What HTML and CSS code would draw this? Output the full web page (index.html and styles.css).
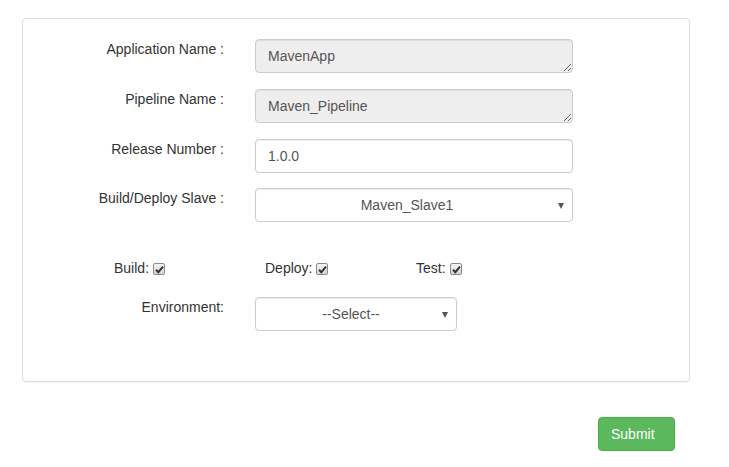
FILE: index.html
```html
<!DOCTYPE html>
<html>
<head>
<meta charset="utf-8">
<link rel="stylesheet" href="styles.css">
</head>
<body>
<div class="page">
  <form class="panel">
    <div class="row">
      <label class="lbl">Application Name :</label>
      <textarea class="field readonly" readonly>MavenApp</textarea>
    </div>
    <div class="row">
      <label class="lbl">Pipeline Name :</label>
      <textarea class="field readonly" readonly>Maven_Pipeline</textarea>
    </div>
    <div class="row">
      <label class="lbl">Release Number :</label>
      <div class="field">1.0.0</div>
    </div>
    <div class="row row-select">
      <label class="lbl">Build/Deploy Slave :</label>
      <div class="field select"><span class="sel-text">Maven_Slave1</span><span class="caret"></span></div>
    </div>
    <div class="checks">
      <div class="check">Build: <span class="box"><svg viewBox="0 0 13 13" width="13" height="13"><path d="M3 6.8 L5.3 9.2 L10 3.6" fill="none" stroke="#333" stroke-width="2"/></svg></span></div>
      <div class="check">Deploy: <span class="box"><svg viewBox="0 0 13 13" width="13" height="13"><path d="M3 6.8 L5.3 9.2 L10 3.6" fill="none" stroke="#333" stroke-width="2"/></svg></span></div>
      <div class="check">Test: <span class="box"><svg viewBox="0 0 13 13" width="13" height="13"><path d="M3 6.8 L5.3 9.2 L10 3.6" fill="none" stroke="#333" stroke-width="2"/></svg></span></div>
    </div>
    <div class="row">
      <label class="lbl">Environment:</label>
      <div class="field select small"><span class="sel-text">--Select--</span><span class="caret"></span></div>
    </div>
  </form>
  <div class="actions">
    <button class="btn-submit" type="button">Submit</button>
  </div>
</div>
</body>
</html>
```

FILE: styles.css
```css
html, body {
  margin: 0;
  padding: 0;
  background: #fff;
}
body {
  font-family: "Liberation Sans", Arial, sans-serif;
  font-size: 14px;
  line-height: 20px;
  color: #333;
}
.page {
  padding: 18px 0 0 22px;
}
.panel {
  width: 666px;
  border: 1px solid #ddd;
  border-radius: 4px;
  box-shadow: 0 1px 1px rgba(0,0,0,0.05);
  padding: 20px 0 50px 0;
  display: flex;
  flex-direction: column;
  gap: 16px;
}
.row {
  display: flex;
  align-items: flex-start;
  gap: 31px;
}
.lbl {
  width: 201px;
  text-align: right;
  padding-top: 0;
  color: #333;
  font-weight: normal;
}
.field {
  box-sizing: border-box;
  width: 318px;
  height: 34px;
  padding: 6px 12px;
  border: 1px solid #ccc;
  border-radius: 4px;
  box-shadow: inset 0 1px 1px rgba(0,0,0,0.075);
  font-family: "Liberation Sans", Arial, sans-serif;
  font-size: 14px;
  line-height: 20px;
  color: #555;
  background: #fff;
  margin: 0;
}
textarea.field {
  display: block;
  resize: vertical;
  overflow: hidden;
}
.readonly {
  background: #eee;
}
.row-select {
  margin-top: -1px;
}
.select {
  display: flex;
  align-items: center;
  height: 34px;
  padding: 0 12px 0 12px;
  position: relative;
}
.sel-text {
  flex: 1;
  text-align: center;
  padding-right: 12px;
}
.small .sel-text {
  padding-right: 8px;
}
.caret {
  width: 0;
  height: 0;
  border-left: 3.5px solid transparent;
  border-right: 3.5px solid transparent;
  border-top: 6px solid #555;
  margin-top: 1px;
  margin-right: -4px;
}
.small {
  width: 202px;
}
.checks {
  display: flex;
  padding-left: 91px;
  margin-top: 20px;
  margin-bottom: 3px;
  color: #333;
}
.check {
  width: 151px;
  display: flex;
  align-items: center;
  gap: 4px;
}
.check:last-child {
  width: auto;
}
.box {
  display: inline-block;
  box-sizing: border-box;
  width: 12px;
  height: 12px;
  border: 1px solid #8a8a8a;
  border-radius: 2px;
  background: linear-gradient(#f4f4f4, #d6d6d6);
  position: relative;
  overflow: hidden;
  margin-top: 1px;
}
.box svg {
  position: absolute;
  left: -1px;
  top: -1px;
}
.actions {
  display: flex;
  justify-content: flex-end;
  width: 653px;
  margin-top: 35px;
}
.btn-submit {
  box-sizing: border-box;
  width: 77px;
  height: 34px;
  background: #5cb85c;
  border: 1px solid #4cae4c;
  border-radius: 4px;
  color: #fff;
  font-family: "Liberation Sans", Arial, sans-serif;
  font-size: 14px;
  line-height: 20px;
  padding: 6px 12px;
  text-align: left;
}
```
